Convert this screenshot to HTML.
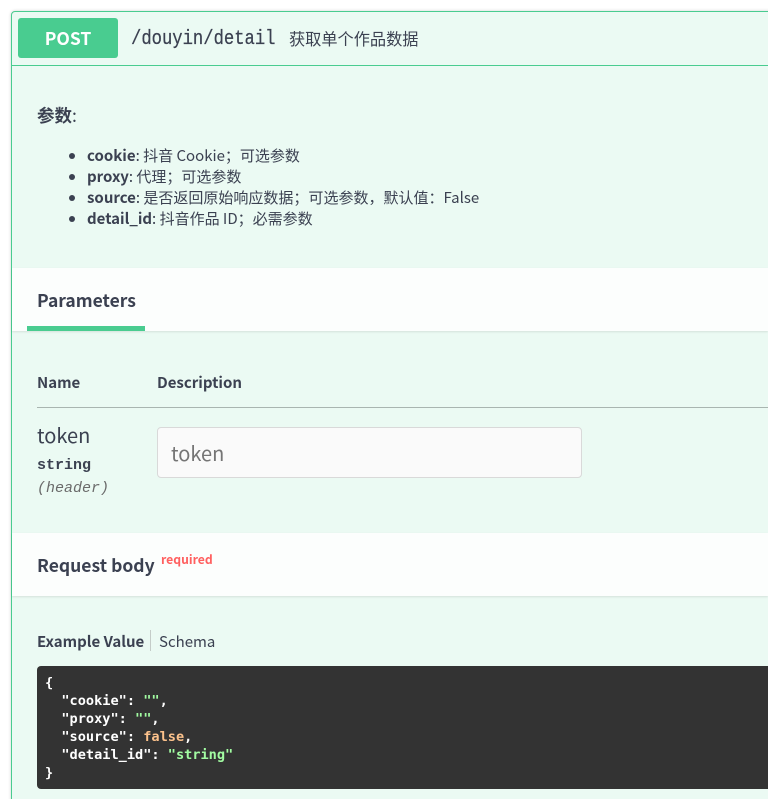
<!DOCTYPE html>
<html>
<head>
<meta charset="utf-8">
<style>
html,body{margin:0;padding:0;width:768px;height:799px;overflow:hidden;background:#fff;}
body{position:relative;font-family:"Noto Sans CJK SC","Liberation Sans",sans-serif;color:#3b4151;}
.a{position:absolute;white-space:nowrap;}
.m{font-family:"Liberation Mono",monospace;}
b{font-weight:700;}
</style>
</head>
<body>
<div class="a" style="left:11px;top:11px;width:770px;height:800px;background:#ebfaf3;border:1px solid #49cc90;border-radius:4px;box-sizing:border-box;box-shadow:0 0 3px rgba(0,0,0,.19);"></div>
<div class="a" style="left:12px;top:65px;width:756px;height:1px;background:#49cc90;"></div>
<div class="a" style="left:18px;top:18px;width:100px;height:40px;background:#49cc90;border-radius:3px;color:#fff;font-weight:700;font-size:17.5px;line-height:42px;text-align:center;">POST</div>
<div class="a m" style="left:131px;top:28px;font-size:20px;line-height:24px;font-weight:400;-webkit-text-stroke:.25px #3b4151;transform:scaleX(.86);transform-origin:0 50%;">/douyin/detail</div>
<div class="a" style="left:289px;top:27px;font-size:16.2px;line-height:22px;">获取单个作品数据</div>

<div class="a" style="left:37px;top:104px;font-size:17.5px;line-height:24px;"><b>参数</b>:</div>
<div class="a" style="left:87px;top:145px;font-size:15px;line-height:21px;">
<b>cookie</b>: 抖音 Cookie；可选参数<br>
<b>proxy</b>: 代理；可选参数<br>
<b>source</b>: 是否返回原始响应数据；可选参数，默认值：False<br>
<b>detail_id</b>: 抖音作品 ID；必需参数
</div>
<div class="a" style="left:69px;top:153px;width:6px;height:6px;border-radius:50%;background:#3b4151;"></div>
<div class="a" style="left:69px;top:174px;width:6px;height:6px;border-radius:50%;background:#3b4151;"></div>
<div class="a" style="left:69px;top:195px;width:6px;height:6px;border-radius:50%;background:#3b4151;"></div>
<div class="a" style="left:69px;top:216px;width:6px;height:6px;border-radius:50%;background:#3b4151;"></div>

<div class="a" style="left:12px;top:268px;width:756px;height:63px;background:#fcfefd;box-shadow:0 1px 2px rgba(0,0,0,.1);"></div>
<div class="a" style="left:37px;top:289px;font-size:17.5px;font-weight:700;line-height:24px;">Parameters</div>
<div class="a" style="left:27px;top:326px;width:118px;height:5px;background:#49cc90;"></div>

<div class="a" style="left:37px;top:372px;font-size:15px;font-weight:700;line-height:21px;">Name</div>
<div class="a" style="left:157px;top:372px;font-size:15px;font-weight:700;line-height:21px;">Description</div>
<div class="a" style="left:37px;top:407px;width:731px;height:1px;background:#a9b5b0;"></div>

<div class="a" style="left:37px;top:420px;font-size:20px;font-weight:400;line-height:29px;">token</div>
<div class="a m" style="left:37px;top:457px;font-size:15px;line-height:18px;font-weight:700;">string</div>
<div class="a m" style="left:37px;top:480px;font-size:15px;line-height:18px;font-style:italic;color:#6b6b6b;">(header)</div>
<div class="a" style="left:157px;top:427px;width:425px;height:51px;box-sizing:border-box;background:#fafafa;border:1px solid #d9d9d9;border-radius:4px;color:#757575;font-size:20px;line-height:50px;padding-left:13px;">token</div>

<div class="a" style="left:12px;top:533px;width:756px;height:63px;background:#fcfefd;box-shadow:0 1px 2px rgba(0,0,0,.1);"></div>
<div class="a" style="left:37px;top:553px;font-size:17.5px;font-weight:700;line-height:26px;">Request body</div>
<div class="a" style="left:161px;top:550px;font-size:12.2px;font-weight:700;line-height:18px;color:#ff6060;">required</div>

<div class="a" style="left:37px;top:631px;font-size:15px;font-weight:700;line-height:22px;">Example Value</div>
<div class="a" style="left:150px;top:630px;width:1px;height:21px;background:#c4ccc8;"></div>
<div class="a" style="left:159px;top:631px;font-size:15px;line-height:22px;">Schema</div>

<div class="a" style="left:37px;top:666px;width:740px;height:123px;background:#333;border-radius:4px;"></div>
<pre class="a" style="left:45px;top:674px;margin:0;white-space:pre;font-family:'DejaVu Sans Mono',monospace;font-size:13.6px;line-height:18px;font-weight:700;color:#fff;">{
  "cookie": <span style="color:#a2fca2">""</span>,
  "proxy": <span style="color:#a2fca2">""</span>,
  "source": <span style="color:#fcc28c">false</span>,
  "detail_id": <span style="color:#a2fca2">"string"</span>
}</pre>
</body>
</html>
